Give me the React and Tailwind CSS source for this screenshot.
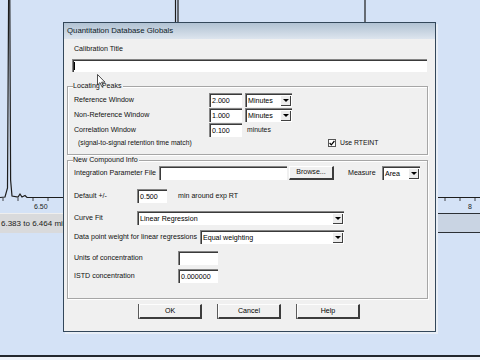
import React from 'react';

const sunken = 'bg-white border-t border-l border-[#858585] shadow-[inset_1px_1px_0_#3a3a3a]';

function Field({ w, value }) {
  return (
    <div className={`${sunken} ${w} shrink-0 h-[14px] flex items-center pl-[2px] pt-[1px] text-black`}>
      {value}
    </div>
  );
}

function Select({ w, value }) {
  return (
    <div className={`${sunken} ${w} shrink-0 h-[14px] flex items-center justify-between pl-[2px] pr-[1px] pt-[1px] text-black`}>
      <span>{value}</span>
      <div className="w-[10px] h-[10px] bg-[#ececec] border-r border-b border-[#404040] flex items-center justify-center">
        <div className="w-0 h-0 border-l-[3px] border-r-[3px] border-t-[3px] border-l-transparent border-r-transparent border-t-black" />
      </div>
    </div>
  );
}

function Button({ children }) {
  return (
    <div className="w-[63px] h-[15px] flex items-center justify-center bg-[#f0f0f0] border-t border-l border-[#fdfdfd] border-r-2 border-b-2 border-r-[#3c3c3c] border-b-[#3c3c3c] shadow-[-1px_0_0_#5a5a5a] text-black">
      {children}
    </div>
  );
}

function Group({ title, className, children }) {
  return (
    <div className={`relative ml-[3px] w-[361px] border border-[#a6a6a6] shadow-[1px_1px_0_#ffffff,inset_1px_1px_0_#ffffff] ${className}`}>
      <span className="absolute -top-[5px] left-[5px] bg-[#f0f0f0] pr-[1px] leading-[9px]">{title}</span>
      {children}
    </div>
  );
}

function Chart() {
  return (
    <svg width="480" height="213" className="block">
      <g stroke="#1d1d1d" fill="none" strokeWidth="1.2">
        <path d="M0 197.5 L5 197 L7.5 188 L8.6 0" />
        <path d="M9.8 0 L10.6 180 L12 196 L18 197 L20 194 L22 197 L25 195.5 L27 197.5 L63 197.5" />
        <path d="M175.5 0 V25 M178 0 V25 M365 0 V25" />
        <path d="M436 197.5 H480" />
        <path d="M3 198 V201 M18 198 V201 M33 198 V201 M48 198 V201 M445 198 V201 M460 198 V201 M475 198 V201" strokeWidth="0.8" />
      </g>
      <text x="34" y="209" fontSize="7" fontFamily="Liberation Sans, sans-serif" fill="#222">6.50</text>
      <text x="468" y="209" fontSize="7" fontFamily="Liberation Sans, sans-serif" fill="#222">8</text>
    </svg>
  );
}

export default function App() {
  return (
    <div className="relative w-[480px] h-[360px] overflow-hidden flex flex-col bg-[#d4e2f6] font-['Liberation_Sans',Arial,sans-serif] text-[7.1px] text-[#111] whitespace-nowrap">
      <Chart />
      <div className="flex h-[20px]">
        <div className="w-[150px] bg-[#d9dadc] border-t border-[#eeeeee] flex items-center pl-px text-[8px] text-[#222]">
          6.383 to 6.464 min
        </div>
        <div className="flex-1 bg-[#c9d4e3] border-y border-[#2c3036]" />
      </div>
      <div className="flex-1" />
      <div className="h-[2px] bg-[#23272d]" />
      <div className="h-[3px] bg-[#eef2f8]" />

      {/* dialog */}
      <div className="absolute left-[63px] top-[22px] w-[373px] h-[310px] bg-[#f0f0f0] border border-[#33475a] shadow-[2px_2px_0_#e8eef6] flex flex-col">
        <div className="h-[16px] bg-gradient-to-b from-[#b1c2d3] to-[#dde5ee] flex items-center pl-[3px] text-[7.8px] text-[#0e1b28]">
          Quantitation Database Globals
        </div>

        <div className="mt-[6px] ml-[10px] leading-[8px]">Calibration Title</div>
        <div className={`${sunken} mt-[6px] ml-[8px] w-[355px] h-[13px] flex items-center pl-[1px]`}>
          <div className="w-px h-[8px] bg-black" />
        </div>

        <Group title="Locating Peaks" className="mt-[14px] pt-[6px] pb-[6px]">
          <div className="flex flex-col gap-[1px] pl-[6px]">
            <div className="flex items-center">
              <span className="w-[135px] shrink-0">Reference Window</span>
              <Field w="w-[33px]" value="2.000" />
              <div className="ml-[3px]"><Select w="w-[47px]" value="Minutes" /></div>
            </div>
            <div className="flex items-center">
              <span className="w-[135px] shrink-0">Non-Reference Window</span>
              <Field w="w-[33px]" value="1.000" />
              <div className="ml-[3px]"><Select w="w-[47px]" value="Minutes" /></div>
            </div>
            <div className="flex items-center">
              <span className="w-[135px] shrink-0">Correlation Window</span>
              <Field w="w-[33px]" value="0.100" />
              <span className="ml-[5px] text-[6.8px]">minutes</span>
            </div>
          </div>
          <div className="flex items-center h-[10px] mt-[1px] pl-[10px] text-[6.8px]">
            <span className="w-[250px] shrink-0">(signal-to-signal retention time match)</span>
            <div className="w-[8px] h-[8px] bg-white border border-[#555] flex items-center justify-center">
              <svg width="6" height="6" viewBox="0 0 6 6"><path d="M0.6 3 L2.3 4.8 L5.4 1" stroke="#000" strokeWidth="1.2" fill="none" /></svg>
            </div>
            <span className="ml-[4px]">Use RTEINT</span>
          </div>
        </Group>

        <Group title="New Compound Info" className="mt-[5px] pt-[5px] pb-[15px]">
          <div className="flex flex-col pl-[6px]">
            <div className="flex items-center">
              <span className="w-[85px] shrink-0">Integration Parameter File</span>
              <Field w="w-[128px]" value="" />
              <div className="ml-[2px] w-[45px] h-[14px] shrink-0 flex items-center justify-center bg-[#f0f0f0] border-t border-l border-white border-r-2 border-b-2 border-r-[#3c3c3c] border-b-[#3c3c3c]">Browse...</div>
              <span className="ml-[14px] w-[34px] shrink-0">Measure</span>
              <Select w="w-[38px]" value="Area" />
            </div>
            <div className="flex items-center mt-[9px]">
              <span className="w-[63px] shrink-0">Default +/-</span>
              <Field w="w-[30px]" value="0.500" />
              <span className="ml-[11px]">min around exp RT</span>
            </div>
            <div className="flex items-center mt-[8px]">
              <span className="w-[63px] shrink-0">Curve Fit</span>
              <Select w="w-[207px]" value="Linear Regression" />
            </div>
            <div className="flex items-center mt-[5px]">
              <span className="w-[126px] shrink-0">Data point weight for linear regressions</span>
              <Select w="w-[144px]" value="Equal weighting" />
            </div>
            <div className="flex items-center mt-[7px]">
              <span className="w-[104px] shrink-0">Units of concentration</span>
              <Field w="w-[40px]" value="" />
            </div>
            <div className="flex items-center mt-[4px]">
              <span className="w-[104px] shrink-0">ISTD concentration</span>
              <Field w="w-[40px]" value="0.000000" />
            </div>
          </div>
        </Group>

        <div className="mt-[5px] flex justify-center gap-[16px]">
          <Button>OK</Button>
          <Button>Cancel</Button>
          <Button>Help</Button>
        </div>
      </div>

      {/* mouse pointer */}
      <svg className="absolute left-[97px] top-[74px]" width="9" height="14" viewBox="0 0 9 14">
        <path d="M0.5 0.5 L0.5 11 L3 8.6 L4.8 12.6 L6.3 12 L4.6 8.2 L8 8.2 Z" fill="#fff" stroke="#222" strokeWidth="0.8" />
      </svg>
    </div>
  );
}
